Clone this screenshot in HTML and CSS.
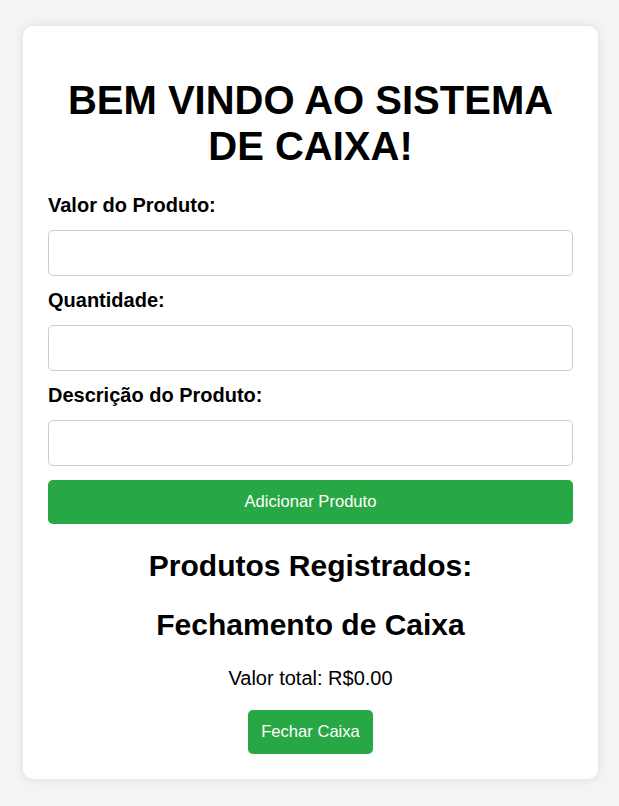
FILE: index.html
```html
<!DOCTYPE html>
<html lang="pt-BR">
<head>
<meta charset="UTF-8">
<title>Sistema de Caixa</title>
<link rel="stylesheet" href="styles.css">
</head>
<body>
<div class="card">
  <h1 class="title">BEM VINDO AO SISTEMA DE CAIXA!</h1>
  <form class="form">
    <label class="label" for="valor">Valor do Produto:</label>
    <input class="input" id="valor" type="text">
    <label class="label" for="qtd">Quantidade:</label>
    <input class="input" id="qtd" type="text">
    <label class="label" for="desc">Descrição do Produto:</label>
    <input class="input" id="desc" type="text">
    <button class="btn btn-full" type="button">Adicionar Produto</button>
  </form>
  <h2 class="subtitle">Produtos Registrados:</h2>
  <h2 class="subtitle">Fechamento de Caixa</h2>
  <p class="total">Valor total: R$0.00</p>
  <div class="actions">
    <button class="btn btn-small" type="button">Fechar Caixa</button>
  </div>
</div>
</body>
</html>
```
FILE: styles.css
```css
html, body {
  margin: 0;
  background: #f4f4f4;
}
body {
  padding: 26px 21px 26px 23px;
  font-family: "Liberation Sans", Arial, sans-serif;
  color: #000;
}
.card {
  background: #fff;
  border-radius: 10px;
  box-shadow: 0 0 10px rgba(0, 0, 0, 0.1);
  padding: 25px;
}
.title {
  font-size: 40px;
  font-weight: bold;
  text-align: center;
  margin: 26px 0 25px;
  line-height: 46px;
}
.form {
  display: flex;
  flex-direction: column;
}
.label {
  display: block;
  font-size: 20px;
  font-weight: bold;
  line-height: 23px;
  margin-bottom: 13px;
}
.input {
  box-sizing: border-box;
  width: 100%;
  height: 46px;
  border: 1px solid #ccc;
  border-radius: 5px;
  margin: 0 0 13px;
  padding: 0 10px;
  font-size: 16px;
}
.btn {
  background: #28a745;
  color: #fff;
  border: none;
  border-radius: 5px;
  font-family: "Liberation Sans", Arial, sans-serif;
  font-size: 16.6px;
  height: 44px;
  cursor: pointer;
}
.btn-full {
  width: 100%;
  margin-top: 1px;
}
.btn-small {
  padding: 0 10px;
  width: 125px;
}
.subtitle {
  font-size: 30px;
  font-weight: bold;
  text-align: center;
  line-height: 34px;
  margin: 25px 0;
}
.total {
  font-size: 20px;
  text-align: center;
  line-height: 23px;
  margin: 20px 0;
}
.actions {
  display: flex;
  justify-content: center;
}
```
